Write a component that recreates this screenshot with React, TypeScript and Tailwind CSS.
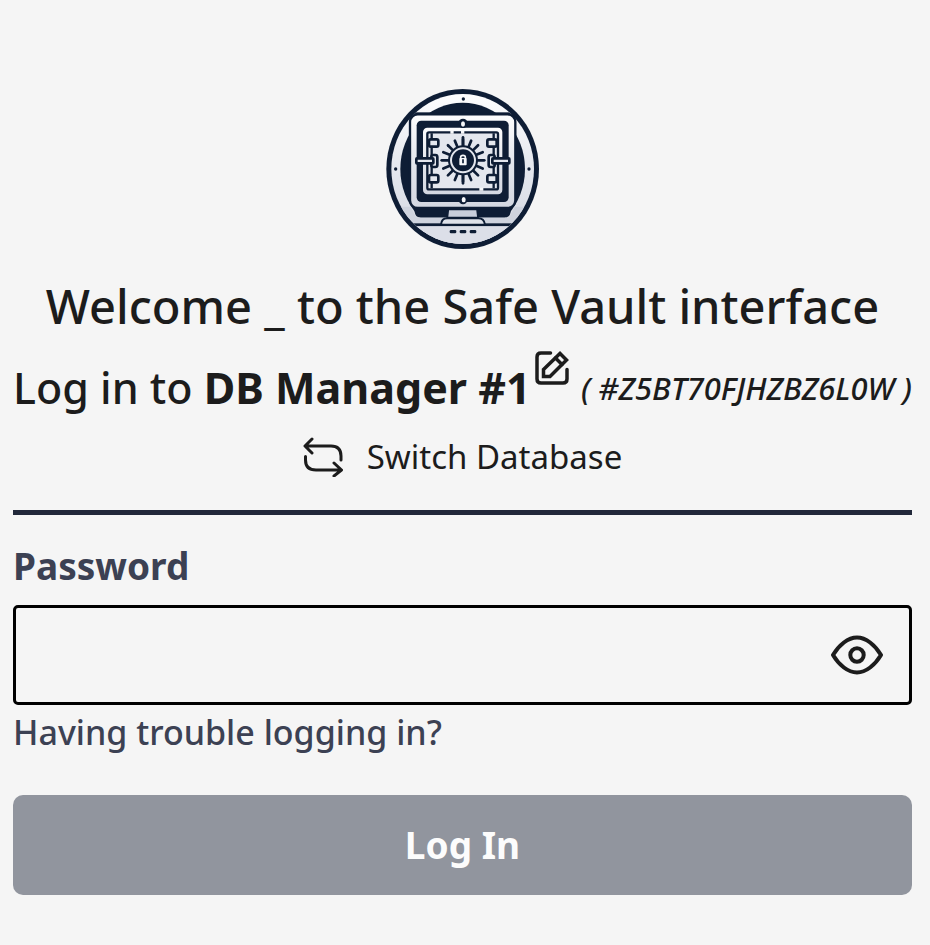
import { useState } from 'react';

const rays = Array.from({ length: 16 }, (_, index) => index * 22.5);

function VaultLogo() {
    return (
        <svg
            viewBox="18 27 459 480"
            className="h-40 w-[153px]"
            role="img"
            aria-label="Safe Vault"
        >
            <defs>
                <linearGradient id="metal" x1="0" y1="0" x2="0" y2="1">
                    <stop offset="0" stopColor="#fdfdfe" />
                    <stop offset="0.5" stopColor="#e4e7ee" />
                    <stop offset="1" stopColor="#d3d7e1" />
                </linearGradient>
                <clipPath id="disc">
                    <ellipse cx="248" cy="267" rx="214" ry="225" />
                </clipPath>
            </defs>
            <ellipse cx="248" cy="267" rx="229" ry="240" fill="#0e1d35" />
            <ellipse cx="248" cy="267" rx="214" ry="225" fill="url(#metal)" />
            <g clipPath="url(#disc)">
                <ellipse cx="248" cy="267" rx="187" ry="199" fill="#0e1d35" />
                <rect x="30" y="97" width="440" height="9" fill="#0e1d35" />
                <path d="M30 380H92L108 412H388L404 380H466V510H30Z" fill="#ced3de" />
                <path d="M104 380H392V396Q390 412 376 412H120Q106 412 104 396Z" fill="#0e1d35" />
                <rect x="30" y="430" width="440" height="9" fill="#0e1d35" />
                <path d="M30 439H466V510H30Z" fill="#dcdfe8" />
            </g>
            <path
                d="M205 388H291L294 413H202Z"
                fill="#c9cedb"
                stroke="#0e1d35"
                strokeWidth="5"
            />
            <path
                d="M183 434Q185 415 201 415H295Q312 415 315 434Z"
                fill="#dfe2ea"
                stroke="#0e1d35"
                strokeWidth="6"
            />
            <rect
                x="90"
                y="103"
                width="316"
                height="281"
                rx="23"
                fill="url(#metal)"
                stroke="#0e1d35"
                strokeWidth="7"
            />
            <rect x="110" y="122" width="276" height="244" rx="14" fill="#0e1d35" />
            <rect x="129" y="143" width="238" height="200" rx="13" fill="url(#metal)" />
            <rect
                x="142"
                y="157"
                width="212"
                height="171"
                rx="5"
                fill="#e4e7ee"
                stroke="#0e1d35"
                strokeWidth="7"
            />
            <path d="M155 160V325M341 160V325" stroke="#0e1d35" strokeWidth="7" />
            <path
                d="M211 157H221M243 157H253M298 328H310"
                stroke="#f7f8fa"
                strokeWidth="9"
            />
            <g fill="#e4e7ee" stroke="#0e1d35" strokeWidth="8">
                <rect x="147" y="178" width="28" height="22" rx="5" />
                <rect x="147" y="285" width="28" height="22" rx="5" />
                <rect x="322" y="178" width="28" height="22" rx="5" />
                <rect x="322" y="285" width="28" height="22" rx="5" />
                <rect x="154" y="225" width="18" height="36" rx="6" />
                <rect x="326" y="225" width="18" height="36" rx="6" />
                <rect x="109" y="235" width="51" height="15" rx="2" />
                <rect x="337" y="235" width="51" height="15" rx="2" />
            </g>
            <path d="M249 172V310" stroke="#0e1d35" strokeWidth="8" strokeLinecap="round" />
            <g stroke="#0e1d35" strokeWidth="8" strokeLinecap="round">
                {rays.map((angle) => (
                    <path
                        key={angle}
                        d="M249 177V200"
                        transform={`rotate(${angle} 249 241)`}
                    />
                ))}
            </g>
            <circle cx="249" cy="241" r="45" fill="#0e1d35" />
            <circle
                cx="249"
                cy="241"
                r="36"
                fill="none"
                stroke="#e4e7ee"
                strokeWidth="6"
            />
            <path
                d="M242 238V231Q242 226 249 226T256 231V238"
                fill="none"
                stroke="#f7f8fa"
                strokeWidth="5"
            />
            <rect x="238" y="234" width="22" height="22" rx="3" fill="#f7f8fa" />
            <path d="M249 238V250" stroke="#0e1d35" strokeWidth="5" />
            <circle cx="249" cy="130" r="14" fill="#0e1d35" />
            <ellipse cx="249" cy="132" rx="6" ry="8" fill="#f7f8fa" />
            <circle cx="249" cy="360" r="13" fill="#0e1d35" />
            <ellipse cx="251" cy="359" rx="6" ry="8" fill="#f7f8fa" />
            <g fill="#0e1d35">
                <circle cx="250" cy="57" r="5" />
                <circle cx="47" cy="267" r="5" />
                <circle cx="447" cy="267" r="5" />
                <rect x="209" y="450" width="20" height="10" rx="4" />
                <rect x="239" y="450" width="20" height="10" rx="4" />
                <rect x="269" y="450" width="20" height="10" rx="4" />
            </g>
        </svg>
    );
}

function EditIcon() {
    return (
        <svg
            viewBox="0 0 34 34"
            className="size-[34px]"
            fill="none"
            stroke="currentColor"
            strokeWidth="3.5"
            strokeLinecap="round"
            strokeLinejoin="round"
        >
            <path d="M15.500 2H6Q2 2 2 6V28Q2 32 6 32H28Q32 32 32 28V18.500" />
            <path d="M8.500 18.500L25 2.500L31.500 9L15 25.500H8.500Z" strokeLinejoin="miter" />
            <path d="M20.500 7L27 13.500" />
        </svg>
    );
}

function SwitchIcon() {
    return (
        <svg
            viewBox="0 0 40 40"
            className="size-10"
            fill="none"
            stroke="currentColor"
            strokeWidth="3"
            strokeLinecap="round"
            strokeLinejoin="round"
        >
            <path d="M9 2L2 9L9 16M2.500 9H28Q38 9 38 19V23" />
            <path d="M31 26L38.500 33L31 39M38 33H13Q2.500 33 2.500 23V19.500" />
        </svg>
    );
}

function EyeIcon() {
    return (
        <svg
            viewBox="0 0 52 40"
            className="h-10 w-[52px]"
            fill="none"
            stroke="currentColor"
            strokeWidth="4"
            strokeLinejoin="round"
        >
            <path d="M2 20C8 10 17 2.500 26 2.500S44 10 50 20C44 30 35 37.500 26 37.500S8 30 2 20Z" />
            <circle cx="26" cy="20" r="6.700" />
        </svg>
    );
}

export default function App() {
    const [password, setPassword] = useState('');
    const [visible, setVisible] = useState(false);

    return (
        <main className="min-h-screen bg-[#f5f5f5] pt-[89px] pr-[18px] pb-12 pl-[13px] font-['Noto_Sans',sans-serif] text-[#1c1c1c]">
            <header className="flex flex-col items-center">
                <VaultLogo />
                <h1 className="mt-6 text-center text-[47px] leading-[66px] font-medium whitespace-nowrap">
                    Welcome _ to the Safe Vault interface
                </h1>
                <h2 className="mt-3 flex w-full items-center justify-between text-[43px] leading-[64px] font-medium whitespace-nowrap">
                    <span className="flex items-center gap-1">
                        <span>
                            Log in to <b className="font-bold">DB Manager #1</b>
                        </span>
                        <button type="button" aria-label="Edit name" className="mb-10">
                            <EditIcon />
                        </button>
                    </span>
                    <i className="text-[31px] font-medium">( #Z5BT70FJHZBZ6L0W )</i>
                </h2>
                <button
                    type="button"
                    className="mt-1 flex items-center gap-6 text-[33px] leading-[56px] font-normal"
                >
                    <SwitchIcon />
                    Switch Database
                </button>
            </header>

            <hr className="mt-[25px] border-t-[5px] border-[#22283a]" />

            <form className="mt-6" onSubmit={(event) => event.preventDefault()}>
                <label
                    htmlFor="password"
                    className="block text-[37px] leading-[54px] font-bold text-[#3c4153]"
                >
                    Password
                </label>
                <div className="mt-3 flex h-[100px] items-center rounded-[5px] border-3 border-black pr-[26px]">
                    <input
                        id="password"
                        type={visible ? 'text' : 'password'}
                        value={password}
                        onChange={(event) => setPassword(event.target.value)}
                        className="h-full min-w-0 flex-1 bg-transparent px-6 text-[33px] outline-none"
                    />
                    <button
                        type="button"
                        aria-label="Show password"
                        onClick={() => setVisible(!visible)}
                    >
                        <EyeIcon />
                    </button>
                </div>
                <a
                    href="#help"
                    className="block text-[34px] leading-[54px] font-medium text-[#3c4153]"
                >
                    Having trouble logging in?
                </a>
                <button
                    type="submit"
                    className="mt-9 h-[100px] w-full rounded-[10px] bg-[#91959e] text-[37px] font-bold text-[#fcfcfc]"
                >
                    Log In
                </button>
            </form>
        </main>
    );
}
